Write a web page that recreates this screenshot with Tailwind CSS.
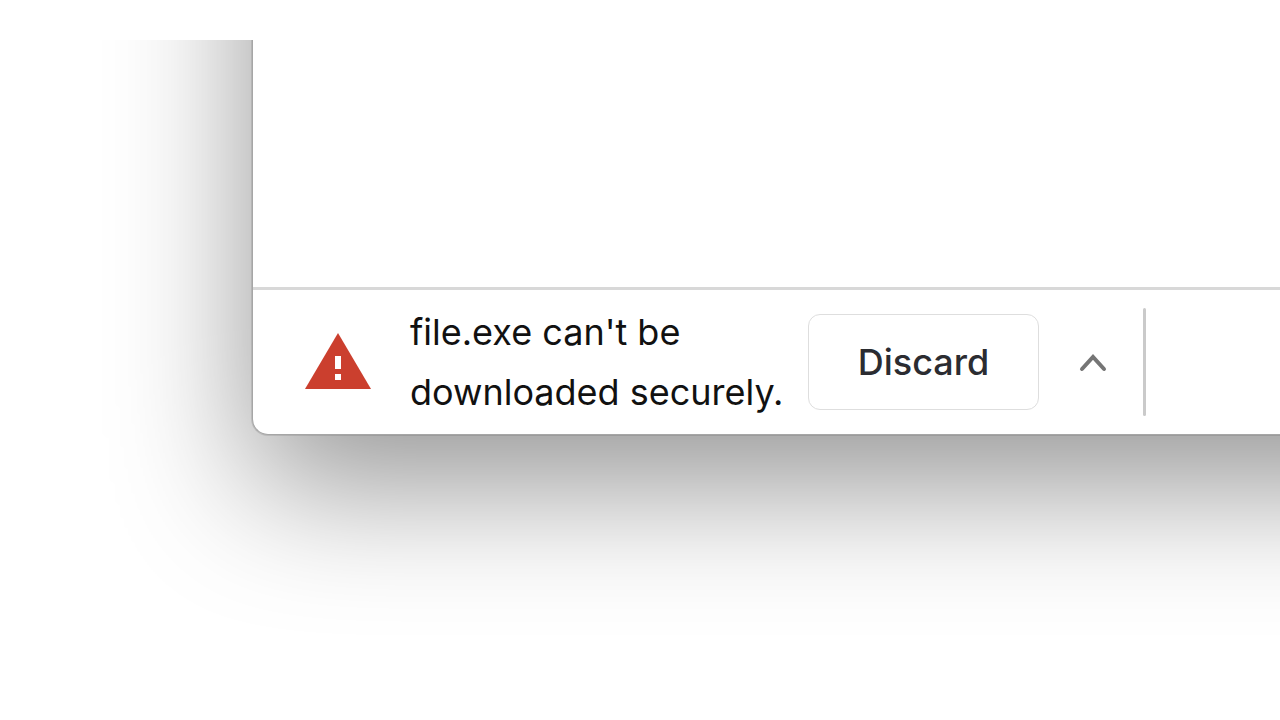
<!DOCTYPE html>
<html lang="en">
<head>
    <meta charset="UTF-8" />
    <meta name="viewport" content="width=device-width, initial-scale=1.0" />
    <title>Downloads</title>
    <script src="https://cdn.jsdelivr.net/npm/@tailwindcss/browser@4"></script>
</head>
<body class="bg-white pt-10 font-['Inter',sans-serif]">
    <!-- Clips the window shadow at the top and right -->
    <div class="overflow-hidden pb-60 pl-[252px]">
        <main class="-mt-80 -mr-80 rounded-bl-2xl border-b border-l border-[#a6a6a6] bg-white pt-80 shadow-[0_0_0_1px_rgba(0,0,0,0.1),0_50px_136px_rgba(0,0,0,0.42)]">
            <div class="h-[247px]"></div>
            <section aria-label="Downloads" class="flex h-[147px] items-center border-t-3 border-[#d8d8d8] pl-[52px]">
                <svg class="h-[60px] w-[66px] shrink-0" viewBox="0 0 66 60" aria-hidden="true">
                    <path d="M33 1 66 57H0Z" fill="#cb3f2e" />
                    <path d="M30 24h6v13h-6zM30 42h6v6h-6z" fill="#fff" />
                </svg>
                <p class="ml-[39px] w-[398px] shrink-0 text-[36px] leading-[60px] text-[#111]">file.exe can't be<br />downloaded securely.</p>
                <button type="button" class="h-24 w-[231px] shrink-0 rounded-xl border border-[#dedede] text-[36px] font-medium text-[#2b2c31]">Discard</button>
                <button type="button" aria-label="More options" class="ml-10 shrink-0">
                    <svg class="h-5 w-7" viewBox="0 0 28 20" fill="none" stroke="#757575" stroke-width="4" stroke-linecap="round">
                        <path d="m3 17 11-12 11 12" />
                    </svg>
                </button>
                <div class="ml-9 h-[108px] w-[3px] shrink-0 rounded-full bg-[#cacaca]"></div>
            </section>
        </main>
    </div>
</body>
</html>
